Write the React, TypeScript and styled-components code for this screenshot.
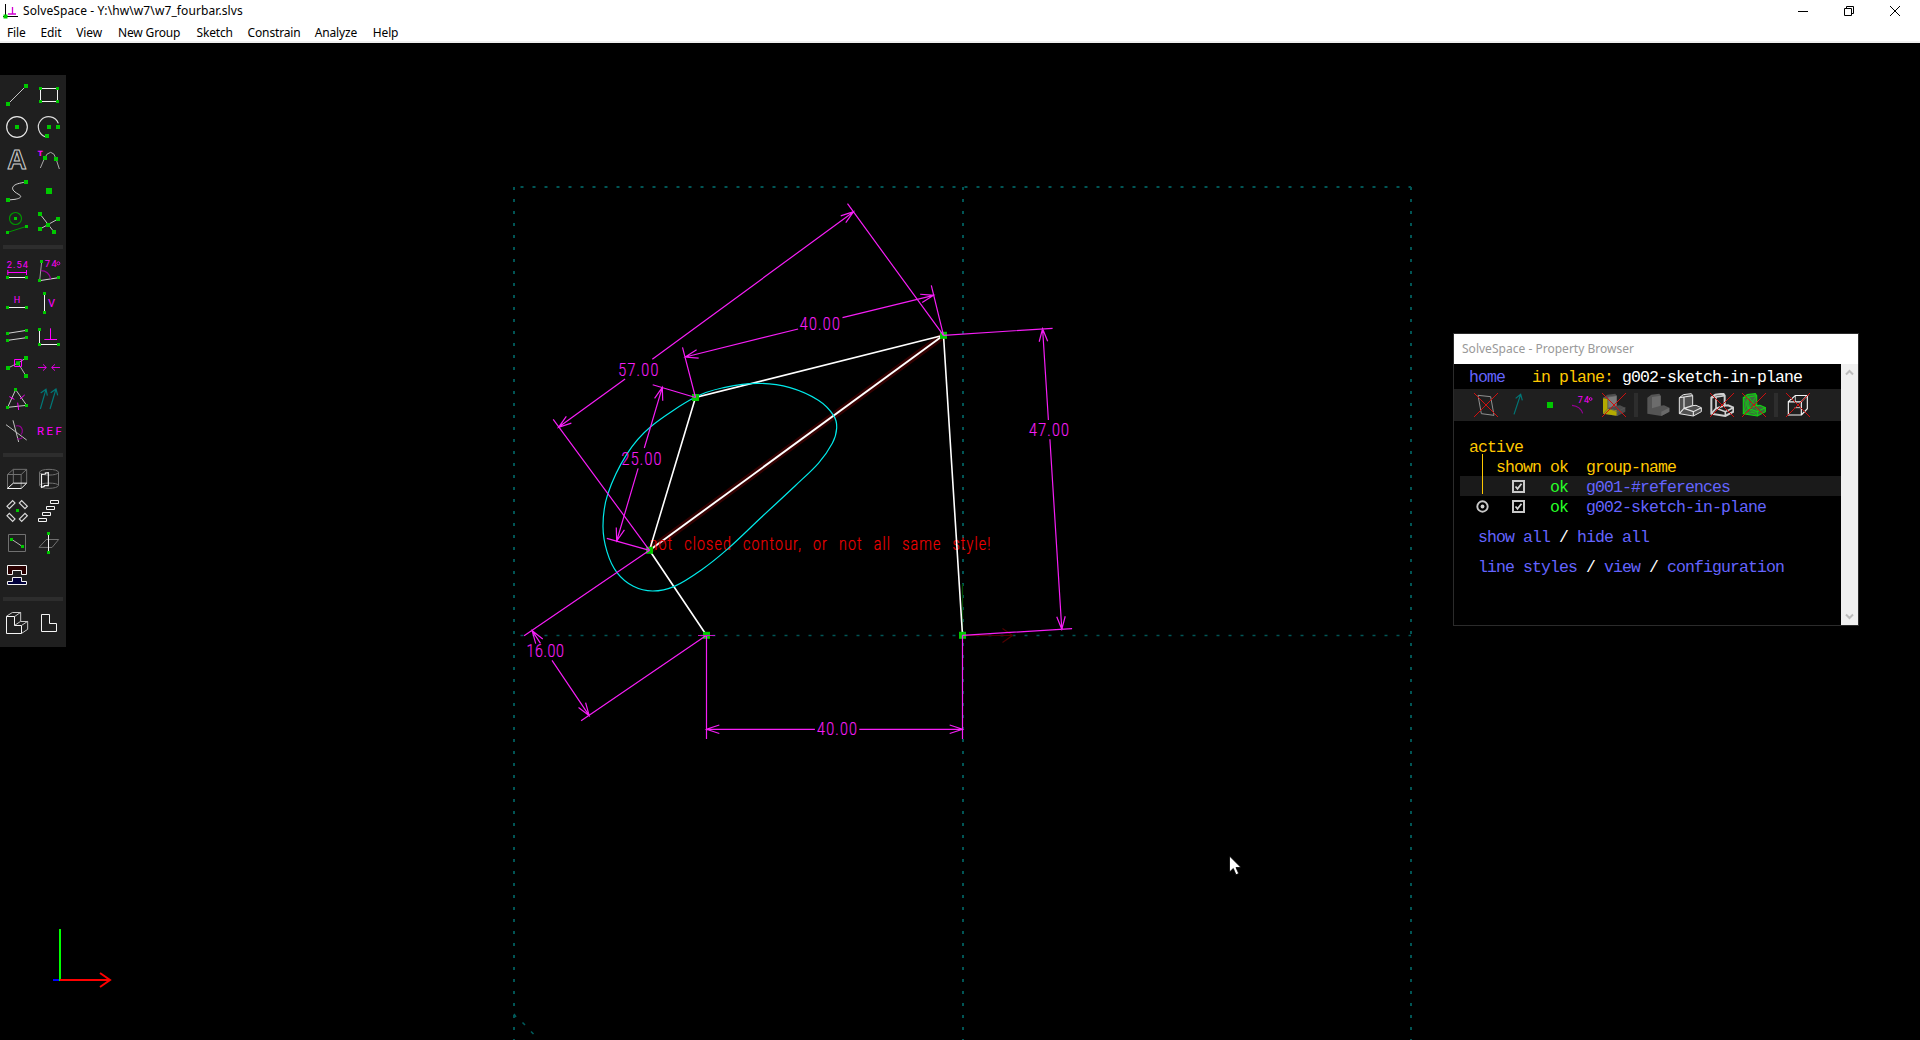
import React from "react";
import styled, { createGlobalStyle } from "styled-components";

const MAGENTA = "#f51ef5";
const HOT = "#ff00ff";
const GREEN = "#00c800";
const UI_FONT = `"Noto Sans", "Open Sans", sans-serif`;

const GlobalStyle = createGlobalStyle`
  * { box-sizing: border-box; }
  body { margin: 0; background: #000; overflow: hidden; }
`;

const Window = styled.div`
  display: flex;
  flex-direction: column;
  width: 1920px;
  height: 1040px;
  background: #000;
  font-family: ${UI_FONT};
  overflow: hidden;
`;

const TitleBar = styled.header`
  display: flex;
  align-items: center;
  height: 22px;
  padding: 0 2px;
  background: #fff;
  color: #000;
  font-size: 12px;
`;

const TitleText = styled.span`
  flex: 1;
  margin-left: 5px;
  letter-spacing: 0.1px;
  line-height: 22px;
  white-space: pre;
`;

const WindowButton = styled.button`
  display: flex;
  align-items: center;
  justify-content: center;
  width: 46px;
  height: 20px;
  padding: 0;
  border: 0;
  background: none;
`;

const MenuBar = styled.nav`
  display: flex;
  gap: 14px;
  height: 21px;
  padding-left: 7px;
  background: #fff;
  border-bottom: 2px solid #f0f0f0;
  color: #000;
  font-size: 12px;
  line-height: 21px;
`;

const MenuItem = styled.span<{ $w: number }>`
  width: ${(p) => p.$w}px;
  letter-spacing: -0.15px;
  white-space: nowrap;
`;

const Workspace = styled.main`
  position: relative;
  flex: 1;
  padding-top: 32px;
`;

const Canvas = styled.svg`
  position: absolute;
  inset: 0;
  display: block;
`;

const Toolbar = styled.aside`
  position: relative;
  display: flex;
  flex-direction: column;
  width: 66px;
  height: 572px;
  padding: 4px 1px;
  background: #1f1f1f;
`;

const ToolGrid = styled.div`
  display: grid;
  grid-template-columns: 32px 32px;
  grid-auto-rows: 32px;
`;

const ToolDivider = styled.div`
  height: 4px;
  margin: 6px 2px;
  background: #2d2d2d;
`;

const ToolIcon = styled.svg`
  display: block;
  width: 32px;
  height: 32px;
`;

const Browser = styled.section`
  position: absolute;
  left: 1453px;
  top: 290px;
  width: 406px;
  height: 293px;
  border: 1px solid #2b2b2b;
  background: #000;
`;

const BrowserTitle = styled.div`
  height: 30px;
  padding-left: 8px;
  background: #fff;
  color: #999;
  font-size: 12px;
  line-height: 30px;
  letter-spacing: 0.02px;
`;

const BrowserBody = styled.div`
  display: grid;
  grid-template-columns: 387px 17px;
  height: 261px;
`;

const Mono = styled.div`
  font-family: "Liberation Mono", monospace;
  font-size: 16.5px;
  letter-spacing: -0.902px;
  white-space: pre;
`;

const Crumbs = styled.div`
  height: 25px;
  padding-left: 15px;
  line-height: 27px;
`;

const Tint = styled.span<{ $c: string }>`
  color: ${(p) => p.$c};
`;

const IconStrip = styled.div`
  display: flex;
  align-items: center;
  gap: 8px;
  height: 32px;
  padding-left: 20px;
  background: #1f1f1f;
`;

const StripIcon = styled.svg`
  display: block;
  width: 24px;
  height: 24px;
`;

const StripDivider = styled.div`
  width: 4px;
  height: 24px;
  background: #2d2d2d;
`;

const GroupTable = styled.div`
  position: relative;
  margin-top: 15px;
`;

const ActiveLine = styled.i`
  position: absolute;
  left: 28px;
  top: 18px;
  width: 1px;
  height: 40px;
  background: #ffc800;
`;

const GroupRow = styled.div<{ $shade?: boolean }>`
  display: grid;
  grid-template-columns: 27px 54px 36px 1fr;
  height: 20px;
  margin-left: 6px;
  padding-left: 9px;
  line-height: 23px;
  background: ${(p) => (p.$shade ? "#1a1a1a" : "transparent")};
`;

const MarkCell = styled.span<{ $x: number }>`
  padding: 4px 0 0 ${(p) => p.$x}px;
  line-height: 0;
`;

const LinkLine = styled.div`
  height: 20px;
  margin-top: 10px;
  padding-left: 24px;
  line-height: 23px;
`;

const ScrollBar = styled.div`
  display: flex;
  flex-direction: column;
  justify-content: space-between;
  align-items: center;
  padding: 5px 0;
  background: #f0f0f0;
`;

/* ---------- shared drawing parts ---------- */

type Pt = [number, number];

const Dots = ({ at, s = 12, c = GREEN }: { at: Pt[]; s?: number; c?: string }) => (
  <>
    {at.map(([x, y]) => (
      <rect key={`${x},${y}`} x={x - s / 2} y={y - s / 2} width={s} height={s} fill={c} />
    ))}
  </>
);

const L = ({ d, c = "#f4f4f4", w = 3, f = "none" }: { d: string; c?: string; w?: number; f?: string }) => (
  <path d={d} stroke={c} strokeWidth={w} fill={f} />
);

const IconText = ({ x, y, s, w, children }: { x: number; y: number; s: number; w: number; children: string }) => (
  <text x={x} y={y} fontSize={s} textLength={w} lengthAdjust="spacing" fill={HOT} fontFamily="Roboto, sans-serif">
    {children}
  </text>
);

/* ---------- toolbar icons: three drawing units per pixel, 96 per cell ---------- */

const sketchTools = [
  <><L d="M24 102L78 48" c="#c4c4c4" /><Dots at={[[24, 102], [78, 48]]} /></>,
  <><L d="M121.500 55.500H172.500V94.500H121.500Z" /><Dots s={9} at={[[121.5, 55.5], [172.5, 55.5], [121.5, 94.5], [172.5, 94.5]]} /></>,
  <><circle cx="51" cy="171" r="31" stroke="#e8e8e8" strokeWidth="3.500" fill="none" /><Dots at={[[51, 171]]} /></>,
  <><L d="M175 160A31 31 0 1 0 138 201" c="#dcdcdc" w={3.5} /><Dots at={[[147, 171], [174, 171], [141, 198]]} /></>,
  <text x="22" y="298" fontSize="83" fontWeight="700" textLength="58" lengthAdjust="spacingAndGlyphs" fontFamily='"Liberation Sans", sans-serif' fill="none" stroke="#d0d0d0" strokeWidth="3">A</text>,
  <><L d="M121 294L133 266Q140 248 152 247Q163 248 168 266L178 297" c="#a8a8a8" /><text x="113" y="258" fontSize="22" fontWeight="700" fill={HOT} fontFamily='"DejaVu Sans", sans-serif'>T</text><Dots at={[[135, 264], [168, 267]]} /></>,
  <><L d="M24 390L45 388C66 384 66 378 54 372C40 364 34 356 40 349C46 342 56 340 78 336" c="#d0d0d0" /><Dots at={[[24, 390], [78, 336]]} /></>,
  <Dots s={18} at={[[147, 363]]} />,
  <><circle cx="46.500" cy="445.500" r="18" stroke="#009600" strokeWidth="3.500" fill="none" /><L d="M23 487L80 469" c="#009600" /><Dots s={9} at={[[46.5, 445.5], [22.5, 487.5], [79.5, 469.5]]} /></>,
  <><L d="M120 432L162 486M120 477L174 447" c="#c4c4c4" /><Dots at={[[120, 432], [162, 486], [120, 477], [174, 447], [144, 465]]} /></>,
];

const constraintTools = [
  <><IconText x={20} y={83} s={28} w={64}>2.54</IconText><L d="M23 97.500H80M23.500 90V105M79.500 90V105" c={HOT} /><L d="M23 112.500H80" /><Dots s={9} at={[[22.5, 112.5], [79.5, 112.5]]} /></>,
  <><L d="M125 65L119 122" c="#a0a0a0" /><L d="M119 122L176 113" c="#d8d8d8" /><L d="M123 92Q146 92 152 117" c="#960096" w={4} /><IconText x={134} y={82} s={28} w={36}>74</IconText><circle cx="175" cy="70" r="4.500" stroke={HOT} strokeWidth="2.500" fill="none" /><Dots s={9} at={[[124.5, 64.5], [118.500, 121.5], [175.5, 112.5]]} /></>,
  <><IconText x={41} y={190} s={27} w={20}>H</IconText><L d="M23 202.500H80" /><Dots s={9} at={[[22.5, 202.5], [79.5, 202.5]]} /></>,
  <><L d="M133.500 160V217" /><IconText x={144} y={202} s={33} w={22}>V</IconText><Dots s={9} at={[[133.5, 160.5], [133.5, 217.5]]} /></>,
  <><L d="M23 280L80 271M23 301L80 293" c="#d0d0d0" /><Dots s={9} at={[[22.5, 280.5], [79.5, 271.5], [22.5, 301.5], [79.5, 292.5]]} /></>,
  <><L d="M118.500 268V313.500H176" /><L d="M151.500 265V298M133 298.500H171" c={HOT} /><Dots s={9} at={[[118.5, 268.5], [118.5, 313.5], [175.5, 313.5]]} /></>,
  <><L d="M24 384L54 369L78 354M54 369L78 408" c="#b0b0b0" /><Dots at={[[24, 384], [54, 370], [78, 354], [78, 408]]} /><L d="M43.500 358.500H64.500V379.500H43.500Z" c={HOT} /></>,
  <L d="M114 382.500H139M129 373L139 382.500L129 392M180 382.500H155M165 373L155 382.500L165 392" c="#e000e0" />,
  <><L d="M47 449L23 502L80 496Z" c="#c8c8c8" /><L d="M28 470L43 478M74 465L60 477M53 488L56 510" c={HOT} /><Dots s={9} at={[[46.5, 448.5], [22.5, 502.5], [79.5, 496.5]]} /></>,
  <L d="M121 507L138 448M122 459L138 448L142 467M150 507L168 447M152 458L168 447L173 466" c="#007878" w={3.5} />,
  <><L d="M18 554L80 600M39 541L56 606" c="#c0c0c0" /><L d="M47 558Q63 554 67 570Q68 580 62 584M52 596Q61 599 68 592" c="#960096" w={3.500} /></>,
  <IconText x={111} y={586} s={34} w={74}>REF</IconText>,
];

const groupTools = [
  <><L d="M22.500 73.500H63.500L80 58H40ZM22.500 73V115M63.500 73V115M80 58V99M40 58V99" c="#707070" /><L d="M22 115.500H63.500L80 99.500H40Z" /></>,
  <><L d="M118.500 67V106M175.500 67V106M118.500 67C120 55 174 55 175.500 67C174 78 120 78 118.500 67M118.500 106C120 118 174 118 175.500 106C174 97 120 97 118.500 106" c="#707070" /><L d="M124.500 73V112L133 109V107H145V68L136 69V72Z" w={3.5} /></>,
  <>
    {([[33, 164, -45], [70, 164, 45], [33, 202, 45], [70, 202, -45]] as const).map(([x, y, r]) => (
      <rect key={`${x}${y}`} x={x - 12} y={y - 5} width="24" height="10" transform={`rotate(${r} ${x} ${y})`} stroke="#d8d8d8" strokeWidth="3.500" fill="none" />
    ))}
    <Dots s={9} at={[[52.5, 181.5]]} />
  </>,
  <L d="M151.500 151.500H175.500V160.500H151.500ZM139.500 169.500H163.500V178.500H139.500ZM127.500 187.500H151.500V196.500H127.500ZM115.500 205.500H139.500V214.500H115.500Z" />,
  <><L d="M25.500 253.500H76.500V304.500H25.500Z" c="#707070" /><L d="M35 268L68 290" c="#b4b4b4" /><Dots s={9} at={[[34.5, 268.5], [67.5, 289.5]]} /></>,
  <><L d="M117 292L139 268.500H176L156 292.500Z" c="#707070" /><L d="M145.500 250V307" /><Dots s={9} at={[[145.5, 250.5], [145.5, 307.5]]} /></>,
  <><L d="M22.500 346.500H79.500V373.500H64.500V361.500H37.500V373.500H22.500Z" f="#2a0000" /><L d="M22.500 403.500V394.500H37.500V382.500H64.500V394.500H79.500V403.500Z" f="#00003c" /></>,
];

const solidTools = [
  <><L d="M44 499.500L62 487M62 487V514M62 514.500H83M44 526L62 514M65 526L83 514M83 514V538L65 550M19 499L37 487.500H62" c="#c8c8c8" /><L d="M19.500 499.500H43.500V526.500H64.500V550.500H19.500Z" /></>,
  <L d="M124.500 493.500H148.500V520.500H169.500V544.500H124.500Z" />,
];

const ToolSet = ({ icons, y0 }: { icons: React.ReactNode[]; y0: number }) => (
  <ToolGrid>
    {icons.map((icon, i) => (
      <ToolIcon key={i} viewBox={`${i % 2 ? 99 : 3} ${y0 + 96 * Math.floor(i / 2)} 96 96`}>
        {icon}
      </ToolIcon>
    ))}
  </ToolGrid>
);

/* ---------- property browser icons (72 units square) ---------- */

const Cross = () => <L d="M0 0L72 72M72 0L0 72" c="#cd1010" />;
const SOLID = "M4 14L16 5L40 2L44 8V38L54 37L70 44V56L46 69L4 62Z";
const SOLID_EDGES = "M4 14L18 12L44 8M18 12V46L4 62M18 46L44 38M18 46L46 56L70 44M46 56V69";

const stripLeft = [
  <><L d="M12 7L50 11L60 67L22 62Z" c="#909090" /><Cross /></>,
  <L d="M24 64L44 4M29 16L44 4L49 22" c="#007878" w={3.5} />,
  <Dots s={18} at={[[36, 36]]} />,
  <><L d="M6 37Q32 40 38 61" c="#960096" w={3.5} /><IconText x={23} y={31} s={27} w={33}>74</IconText><circle cx="62" cy="18" r="4" stroke={HOT} strokeWidth="2.500" fill="none" /></>,
  <><path d={SOLID} fill="#4c4c4c" /><path d="M18 12L44 8V38L18 46Z" fill="#7c7c7c" /><path d="M3 16L17 18V48L44 52V68L3 62Z" fill="#b4aa00" /><L d={SOLID_EDGES} c="#5c5c5c" w={2} /><Cross /></>,
];
const stripMid = [
  <><path d={SOLID} fill="#555" /><path d="M18 12L44 8V38L18 46Z" fill="#6c6c6c" /><path d="M46 56L70 44V56L46 69Z" fill="#6a6a6a" /></>,
  <><path d={SOLID} fill="#505050" /><L d={SOLID} c="#e4e4e4" /><L d={SOLID_EDGES} c="#e4e4e4" w={3.5} /></>,
  <><L d={SOLID} c="#cfcfcf" w={6} /><L d={SOLID_EDGES} c="#cfcfcf" w={5} /><Cross /></>,
  <><path d={SOLID} fill="#3c6e3c" /><L d={SOLID} c="#10d210" w={3.5} /><L d={SOLID_EDGES} c="#10d210" /><L d="M4 62L18 12M18 46L44 8M4 14L18 46L46 69M44 38L46 56M4 62L46 56M20 12L40 38" c="#10d210" w={2} /><Cross /></>,
];
const stripRight = [
  <><L d="M7 26.500H46V66H7ZM7 26L28 7.500H64L46 26M64 8V47L46 66" w={3.5} /><L d="M26 44H46M28 8V26" c="#e0e0e0" w={2.500} /><Cross /></>,
];

const StripSet = ({ icons }: { icons: React.ReactNode[] }) => (
  <>
    {icons.map((icon, i) => (
      <StripIcon key={i} viewBox="0 0 72 72">{icon}</StripIcon>
    ))}
  </>
);

const Check = () => (
  <svg width="13" height="13" viewBox="0 0 13 13">
    <rect x="1" y="1" width="11" height="11" fill="none" stroke="#c8c8c8" strokeWidth="2" />
    <path d="M3.500 6.500L5.500 8.800L9.500 3.800" fill="none" stroke="#d8d8d8" strokeWidth="1.700" />
  </svg>
);

const Radio = () => (
  <svg width="13" height="13" viewBox="0 0 13 13">
    <circle cx="6.500" cy="6.500" r="5.200" fill="none" stroke="#c8c8c8" strokeWidth="1.900" />
    <circle cx="6.500" cy="6.500" r="1.900" fill="#d0d0d0" />
  </svg>
);

const Chevron = ({ up }: { up?: boolean }) => (
  <svg width="9" height="7" viewBox="0 0 9 7">
    <path d={up ? "M1 5.500L4.500 2L8 5.500" : "M1 1.500L4.500 5L8 1.500"} fill="none" stroke="#bdbdbd" strokeWidth="2" />
  </svg>
);

/* ---------- drawing ---------- */

const arrowHead = (tip: Pt, from: Pt) => {
  const a = Math.atan2(from[1] - tip[1], from[0] - tip[0]);
  const barb = (t: number) => `${tip[0] + 13.5 * Math.cos(a + t)} ${tip[1] + 13.5 * Math.sin(a + t)}`;
  return `M${barb(0.32)}L${tip[0]} ${tip[1]}L${barb(-0.32)}`;
};

/* Condensed, widely tracked lettering like a plotter font. */
const NARROW = 0.8;

const PlotText = ({ x, y, w, fill, children }: { x: number; y: number; w: number; fill: string; children: string }) => (
  <text
    transform={`translate(${x} ${y}) scale(${NARROW} 1)`}
    fontSize="17.800" fontWeight="300" fontFamily="Roboto, sans-serif"
    fill={fill} stroke={fill} strokeWidth="0.150" wordSpacing="8"
    textLength={w / NARROW} lengthAdjust="spacing"
  >
    {children}
  </text>
);

interface DimProps {
  a: Pt; b: Pt;
  extA: [Pt, Pt]; extB: [Pt, Pt];
  gapA: Pt; gapB: Pt;
  label: string; x: number; y: number; w?: number;
}

const Dimension = ({ a, b, extA, extB, gapA, gapB, label, x, y, w = 38.5 }: DimProps) => (
  <g>
    <path
      d={`M${a}L${gapA}M${gapB}L${b}M${extA[0]}L${extA[1]}M${extB[0]}L${extB[1]}${arrowHead(a, b)}${arrowHead(b, a)}`}
      stroke={MAGENTA} strokeWidth="1.200" fill="none"
    />
    <PlotText x={x - 1} y={y} w={w + 1.5} fill={MAGENTA}>{label}</PlotText>
  </g>
);

const A: Pt = [695.5, 397.5];
const B: Pt = [943.5, 335.3];
const C: Pt = [649.5, 550.3];
const D: Pt = [706.5, 635.3];
const O: Pt = [962.5, 635.3];

const couplerPoints: Pt[] = (
  [
    [300, 67], [390, 37], [490, 25], [585, 38], [670, 76], [716, 122], [725, 160], [712, 205],
    [670, 265], [600, 333], [500, 426], [400, 520], [320, 584], [238, 634], [173, 648], [115, 634],
    [66, 593], [36, 530], [24, 452], [38, 358], [95, 238], [167, 155],
  ] as Pt[]
).map(([x, y]) => [595 + x / 3, 375 + y / 3]);

const smoothLoop = (p: Pt[]) => {
  const n = p.length;
  let d = `M${p[0]}`;
  for (let i = 0; i < n; i++) {
    const p0 = p[(i + n - 1) % n], p1 = p[i], p2 = p[(i + 1) % n], p3 = p[(i + 2) % n];
    d += `C${p1[0] + (p2[0] - p0[0]) / 6} ${p1[1] + (p2[1] - p0[1]) / 6} ${p2[0] - (p3[0] - p1[0]) / 6} ${p2[1] - (p3[1] - p1[1]) / 6} ${p2}`;
  }
  return d;
};

const Drawing = () => (
  <Canvas width="1920" height="997" viewBox="0 43 1920 997">
    <g stroke="#005555" strokeWidth="2" strokeDasharray="3 9">
      <path d="M514 187V1040M1411 187V1040M963 187V1040" />
      <path d="M520.500 187H1411" />
      <path d="M520.500 635.500H1411" strokeWidth="1.300" />
    </g>
    <path d="M514 1014l2 3M522.500 1022.500l2.500 2.500M531 1031.500l2.500 2.500" stroke="#005c5c" strokeWidth="1.500" />
    <path d="M962.500 635V584" stroke="#004b00" strokeWidth="1.200" />
    <path d="M962.500 635.500H1012.500M1002.500 628.500L1012.500 635.500L1002.500 642.500" stroke="#500000" strokeWidth="1.200" fill="none" />

    <path d={`M${C}L${B}`} stroke="#330000" strokeWidth="7" />
    <path d={`M${C}L${B}`} stroke="#fff" strokeWidth="1.900" />
    <PlotText x={649.5} y={549.8} w={341} fill="#f00000">
      not closed contour, or not all same style!
    </PlotText>
    <path d={`M${B}L${A}L${C}L${D}M${B}L${O}`} stroke="#fff" strokeWidth="1.600" fill="none" />
    <path d={smoothLoop(couplerPoints)} stroke="#00eaea" strokeWidth="1.200" fill="none" />

    <Dots s={7} at={[A, B, C, D, O]} />

    <Dimension a={[558.5, 427.3]} b={[853.6, 211.7]} extA={[C, [553.2, 419.3]]} extB={[B, [847.5, 203.7]]} gapA={[625.1, 379]} gapB={[652.3, 359.3]} label="57.00" x={619.3} y={375.6} />
    <Dimension a={[685.2, 357]} b={[933.6, 295.3]} extA={[A, [682.5, 347.3]]} extB={[B, [931.3, 285.3]]} gapA={[798.1, 329]} gapB={[842.5, 317.7]} label="40.00" x={800.8} y={330.400} />
    <Dimension a={[1042.6, 328.7]} b={[1061.8, 629.3]} extA={[B, [1052.6, 328.3]]} extB={[O, [1072.1, 628.7]]} gapA={[1048.4, 420]} gapB={[1049.9, 439.3]} label="47.00" x={1030} y={436.400} />
    <Dimension a={[662.3, 387.3]} b={[616.7, 541]} extA={[A, [652.7, 384.7]]} extB={[C, [606.8, 538.3]]} gapA={[644.3, 448]} gapB={[638.1, 468.3]} label="25.00" x={622.5} y={464.6} />
    <Dimension a={[532.1, 630.7]} b={[589.2, 715.7]} extA={[C, [524.1, 635.7]]} extB={[D, [581.1, 720.7]]} gapA={[540.5, 643.3]} gapB={[552, 660.3]} label="16.00" x={527.5} y={657.400} w={36} />
    <Dimension a={[706.5, 729.3]} b={[962.5, 729.3]} extA={[D, [706.5, 739]]} extB={[O, [962.5, 739]]} gapA={[814.9, 729.3]} gapB={[859.3, 729.3]} label="40.00" x={818} y={735.400} />
    <path d="M698 635.500H715" stroke="#c814c8" />

    <path d="M53 980H60" stroke="#0000ff" strokeWidth="2" />
    <path d="M60 981V929" stroke="#00ff00" strokeWidth="2" />
    <path d="M60 980H110M100 973L110 980L100 987" stroke="#ff0000" strokeWidth="2" fill="none" />

    <path d="M1229.500 856V872L1233.300 868.500L1236 874.800L1238.700 873.500L1236 867.500H1241Z" fill="#fff" stroke="#000" strokeWidth="0.800" />
  </Canvas>
);

const LINK = "#6464ff";
const ORANGE = "#ffc800";
const OK = "#28ff28";

const menus: [string, number][] = [
  ["File", 19.5], ["Edit", 21.8], ["View", 27.7], ["New Group", 64.5],
  ["Sketch", 37.1], ["Constrain", 53.1], ["Analyze", 44.1], ["Help", 27],
];

export default function App() {
  return (
    <Window>
      <GlobalStyle />
      <TitleBar>
        <svg width="16" height="16" viewBox="0 0 16 16">
          <path d="M3.500 1V15M1 13.500H16" stroke="#000" />
          <path d="M10.500 4V11M6 11H14" stroke="#d200d2" strokeWidth="1.300" />
          <rect x="1.500" y="11.500" width="4" height="4" fill="#00d200" />
        </svg>
        <TitleText>{"SolveSpace - Y:\\hw\\w7\\w7_fourbar.slvs"}</TitleText>
        <WindowButton aria-label="Minimize">
          <svg width="10" height="10"><path d="M0 5.500H10" stroke="#000" /></svg>
        </WindowButton>
        <WindowButton aria-label="Restore">
          <svg width="10" height="10"><path d="M.5 2.500H7.500V9.500H.5ZM2.500 2.500V.5H9.500V7.500H7.500" stroke="#000" fill="none" /></svg>
        </WindowButton>
        <WindowButton aria-label="Close">
          <svg width="10" height="10"><path d="M0 0L10 10M10 0L0 10" stroke="#000" /></svg>
        </WindowButton>
      </TitleBar>
      <MenuBar>
        {menus.map(([name, w]) => (
          <MenuItem key={name} $w={w}>{name}</MenuItem>
        ))}
      </MenuBar>
      <Workspace>
        <Drawing />
        <Toolbar>
          <ToolSet icons={sketchTools} y0={27} />
          <ToolDivider />
          <ToolSet icons={constraintTools} y0={45} />
          <ToolDivider />
          <ToolSet icons={groupTools} y0={39} />
          <ToolDivider />
          <ToolSet icons={solidTools} y0={471} />
        </Toolbar>
        <Browser>
          <BrowserTitle>SolveSpace - Property Browser</BrowserTitle>
          <BrowserBody>
            <Mono>
              <Crumbs>
                <Tint $c={LINK}>home</Tint>{"   "}<Tint $c={ORANGE}>in plane:</Tint> <Tint $c="#fff">g002-sketch-in-plane</Tint>
              </Crumbs>
              <IconStrip>
                <StripSet icons={stripLeft} />
                <StripDivider />
                <StripSet icons={stripMid} />
                <StripDivider />
                <StripSet icons={stripRight} />
              </IconStrip>
              <GroupTable>
                <GroupRow><Tint $c={ORANGE}>active</Tint></GroupRow>
                <GroupRow>
                  <span /><Tint $c={ORANGE}>shown</Tint><Tint $c={ORANGE}>ok</Tint><Tint $c={ORANGE}>group-name</Tint>
                </GroupRow>
                <GroupRow $shade>
                  <span /><MarkCell $x={16}><Check /></MarkCell><Tint $c={OK}>ok</Tint><Tint $c={LINK}>g001-#references</Tint>
                </GroupRow>
                <GroupRow>
                  <MarkCell $x={7}><Radio /></MarkCell><MarkCell $x={16}><Check /></MarkCell><Tint $c={OK}>ok</Tint><Tint $c={LINK}>g002-sketch-in-plane</Tint>
                </GroupRow>
                <ActiveLine />
              </GroupTable>
              <LinkLine>
                <Tint $c={LINK}>show all</Tint><Tint $c="#fff"> / </Tint><Tint $c={LINK}>hide all</Tint>
              </LinkLine>
              <LinkLine>
                <Tint $c={LINK}>line styles</Tint><Tint $c="#fff"> / </Tint><Tint $c={LINK}>view</Tint><Tint $c="#fff"> / </Tint><Tint $c={LINK}>configuration</Tint>
              </LinkLine>
            </Mono>
            <ScrollBar><Chevron up /><Chevron /></ScrollBar>
          </BrowserBody>
        </Browser>
      </Workspace>
    </Window>
  );
}
